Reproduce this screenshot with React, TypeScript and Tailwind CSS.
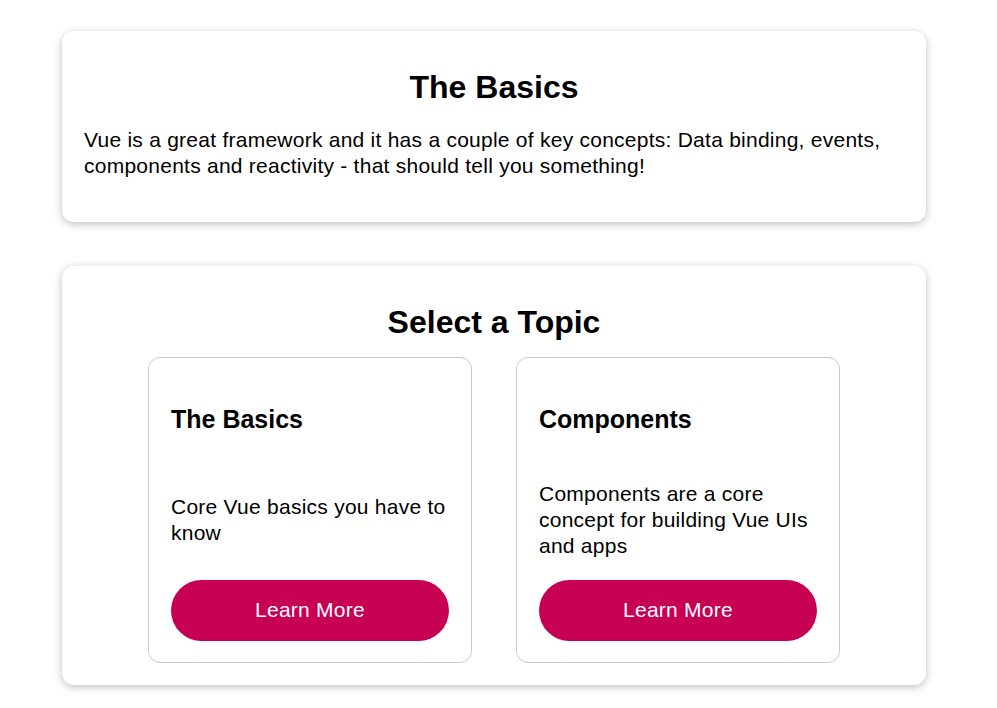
const topics = [
  {
    id: "basics",
    title: "The Basics",
    description: "Core Vue basics you have to know",
  },
  {
    id: "components",
    title: "Components",
    description: "Components are a core concept for building Vue UIs and apps",
  },
];

function TopicCard({ title, description }: { title: string; description: string }) {
  return (
    <div className="flex h-[306px] w-[324px] flex-col justify-between rounded-[12px] border border-[#cccccc] px-[22px] pt-[22px] pb-[21px]">
      <h3 className="mt-[25px] mb-[25px] text-[25px] font-bold leading-[29px]">{title}</h3>
      <p className="text-[21px] leading-[26px] tracking-[0.25px]">{description}</p>
      <button className="h-[61px] w-full shrink-0 rounded-full bg-[#c70052] pb-[2px] text-[21px] tracking-[0.25px] text-white">
        Learn More
      </button>
    </div>
  );
}

export default function App() {
  return (
    <div className="min-h-screen bg-white pt-[31px] pb-[23px] font-['Liberation_Sans',Arial,sans-serif] text-black">
      <section className="ml-[62px] w-[864px] rounded-[12px] bg-white px-[22px] pt-[38px] pb-[43px] shadow-[0_2px_8px_rgba(0,0,0,0.26)]">
        <h2 className="text-center text-[32px] font-bold leading-[37px]">The Basics</h2>
        <p className="mt-[21px] text-[21px] leading-[26px] tracking-[0.25px]">
          Vue is a great framework and it has a couple of key concepts: Data binding, events,
          components and reactivity - that should tell you something!
        </p>
      </section>

      <section className="mt-[44px] ml-[62px] w-[864px] rounded-[12px] bg-white px-[22px] pt-[38px] pb-[22px] shadow-[0_2px_8px_rgba(0,0,0,0.26)]">
        <h2 className="text-center text-[32px] font-bold leading-[37px]">Select a Topic</h2>
        <div className="mt-[16px] flex justify-center gap-[44px]">
          {topics.map((t) => (
            <TopicCard key={t.id} title={t.title} description={t.description} />
          ))}
        </div>
      </section>
    </div>
  );
}
